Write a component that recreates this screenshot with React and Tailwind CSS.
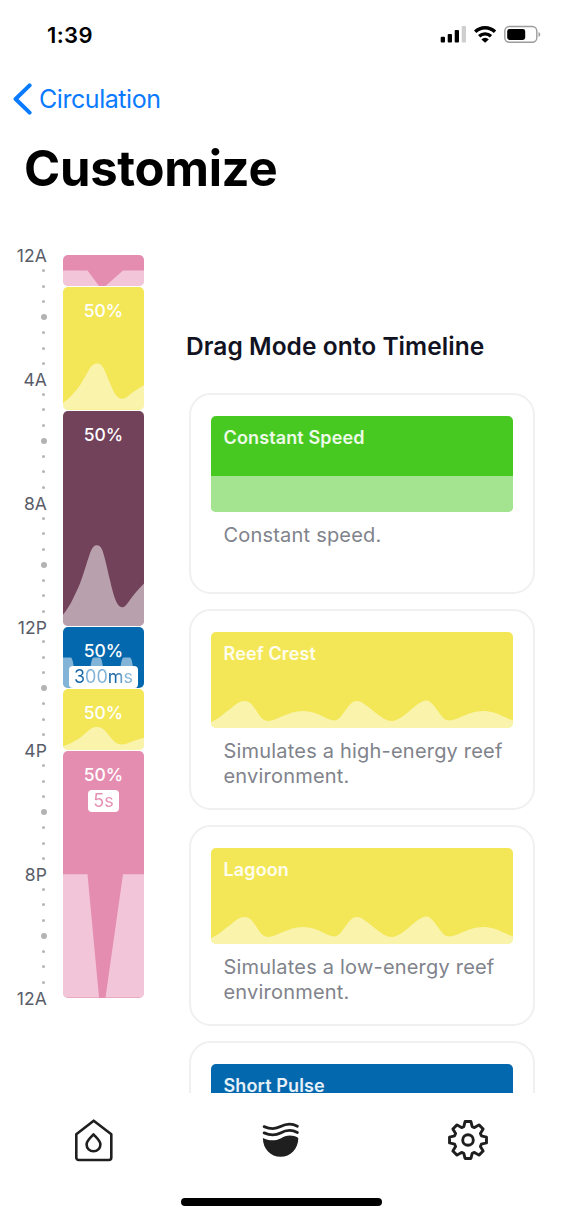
import React from 'react'

const HOUR = 30.94

const shapes = {
  reef: 'M0 94.5 C4 92 7 90 9 88 C12 85 14.5 83 17 80 C21 75 24 70 27 66 C29.5 63 31.5 62.3 34 62.3 C37 62.3 39 63.5 41 67 C43.5 71 45 75 47 78.5 C49 82.5 50.5 85 52 87 C54.5 90.3 57 91 59 91 C62 91 64.5 89.3 67 87.5 C72 84.5 76 82.3 81 80 V100 H0 Z',
  feed: 'M0 50 H24.5 L36 100 H0 Z M42.5 100 L60 50 H81 V100 Z',
  pulse: 'M0 50 H7.5 C9 50 9.5 54 10.5 62 C11.5 80 13 100 15 100 H0 Z M23 100 C25 100 26.5 80 27.5 66 C28.5 53 29.5 50 31 50 H36.5 C38 50 39 53 40 66 C41 80 42.5 100 44.5 100 Z M53 100 C55 100 56.5 80 57.5 66 C58.5 53 59.5 50 61 50 H66.5 C68 50 69 53 70 66 C71 80 72.5 100 74.5 100 Z',
}

const blocks = [
  { hours: 1, color: 'bg-[#e58db0]', shape: 'feed' },
  { hours: 4, color: 'bg-[#f3e757]', shape: 'reef', speed: '50%' },
  { hours: 7, color: 'bg-[#72415a]', shape: 'reef', speed: '50%' },
  {
    hours: 2,
    color: 'bg-[#0468ae]',
    shape: 'pulse',
    speed: '50%',
    badge: '300ms',
    badgeColor: 'bg-[linear-gradient(90deg,#0f62a3_0_14%,#81b2d6_22%_55%,#1767a5_58%_74%,#81b2d6_83%)]',
  },
  { hours: 2, color: 'bg-[#f3e757]', shape: 'reef', speed: '50%' },
  {
    hours: 8,
    color: 'bg-[#e58db0]',
    shape: 'feed',
    speed: '50%',
    badge: '5s',
    badgeColor: 'bg-[#e58db0]',
  },
]

const labels = ['12A', '4A', '8A', '12P', '4P', '8P', '12A']

const reefPreview =
  'M0 90 C5 88.5 10 84 15 80 C23 75 26 69 34 69 C44 69 47 89 57 89 C65 89 77 79 92 79 C107 79 116 88.5 123 88.5 C132 88.5 136 69 146 69 C155 69 169 89 181 89 C192 89 206 68.5 215 68.5 C224 68.5 229 88.5 238 88.5 C247 88.5 257 79 272 79 C285 79 294 86 302 88.5 V96 H0 Z'

const modes = [
  {
    title: 'Constant Speed',
    description: 'Constant speed.',
    color: 'bg-[#48c921]',
    path: 'M0 60 H302 V96 H0 Z',
  },
  {
    title: 'Reef Crest',
    description: 'Simulates a high-energy reef environment.',
    color: 'bg-[#f3e757]',
    path: reefPreview,
  },
  {
    title: 'Lagoon',
    description: 'Simulates a low-energy reef environment.',
    color: 'bg-[#f3e757]',
    path: reefPreview,
  },
  {
    title: 'Short Pulse',
    color: 'bg-[#0468ae]',
    path: 'M0 60 H20 L30 96 H0 Z',
  },
]

const gearPoints = Array.from({ length: 8 })
  .flatMap((_, i) =>
    [
      [-17.5, 14],
      [-9, 18.7],
      [9, 18.7],
      [17.5, 14],
    ].map(([offset, radius]) => {
      const angle = ((i * 45 + offset - 90) * Math.PI) / 180
      return `${(22 + radius * Math.cos(angle)).toFixed(2)},${(22 + radius * Math.sin(angle)).toFixed(2)}`
    })
  )
  .join(' ')

const StatusBar = () => (
  <div className="flex h-[70px] shrink-0 items-center justify-between pl-[47px] pr-[20px]">
    <span className="text-[22px] font-semibold leading-none tracking-[0.4px]">1:39</span>
    <svg width="102" height="20" viewBox="440 25 102 20">
      <rect x="440.7" y="36.7" width="4.3" height="5.8" rx="1" />
      <rect x="447.7" y="34" width="4.3" height="8.5" rx="1" />
      <rect x="454.7" y="30" width="4.3" height="12.5" rx="1" />
      <rect x="461.7" y="26" width="4.3" height="16.5" rx="1" fill="#cfcfcf" />
      <g fill="none" stroke="#000" strokeWidth="3.4">
        <path d="M475.2 31.8 A14 14 0 0 1 495 31.8" />
        <path d="M479.2 36.2 A8.6 8.6 0 0 1 491 36.2" />
      </g>
      <path d="M485.1 42.8 L481.4 39.4 A5.2 5.2 0 0 1 488.8 39.4 Z" />
      <rect x="504.8" y="26.5" width="32" height="15.8" rx="4.5" fill="none" stroke="#9c9c9c" strokeWidth="1.4" />
      <rect x="507.2" y="29" width="18" height="11" rx="2.4" />
      <path d="M538.5 32 C540.8 33 540.8 36 538.5 37 Z" fill="#9c9c9c" />
    </svg>
  </div>
)

const TimeScale = () => (
  <div className="flex w-[47px] flex-col pt-[17.5px]">
    {Array.from({ length: 49 }).map((_, i) => (
      <div key={i} className="flex shrink-0 items-center justify-end" style={{ height: HOUR / 2 }}>
        {i % 8 === 0 ? (
          <span className="pt-[2px] text-[17.5px] leading-none tracking-[0.1px] text-[#595d69]">{labels[i / 8]}</span>
        ) : (
          <div className="flex w-[7px] justify-center">
            <div className={i % 8 === 4 ? 'size-[6px] rounded-full bg-[#b3b3b3]' : 'size-[3px] rounded-full bg-[#b5b5b9]'} />
          </div>
        )}
      </div>
    ))}
  </div>
)

const Timeline = () => (
  <div className="ml-4 flex w-[81px] flex-col pt-[25px]">
    {blocks.map((block, i) => (
      <div key={i} className="shrink-0 pt-px first:pt-0" style={{ height: block.hours * HOUR }}>
        <div className={`relative h-full overflow-hidden rounded-[5px] ${block.color}`}>
          <svg className="absolute inset-0 size-full" viewBox="0 0 81 100" preserveAspectRatio="none">
            <path d={shapes[block.shape]} fill="#fff" fillOpacity="0.5" />
          </svg>
          <div className="relative flex flex-col items-center pt-[15px] text-[17.5px] font-medium leading-[18px] text-white">
            {block.speed && <span>{block.speed}</span>}
            {block.badge && (
              <span className="mt-[6px] flex h-[22px] items-center rounded-[4px] bg-white px-[5px]">
                <span className={`bg-clip-text text-[18px] font-normal leading-[22px] text-transparent ${block.badgeColor}`}>
                  {block.badge}
                </span>
              </span>
            )}
          </div>
        </div>
      </div>
    ))}
  </div>
)

const ModeCard = ({ mode }) => (
  <div className="h-[201px] shrink-0 rounded-[22px] border-2 border-[#f0f0f1] bg-white px-5 pt-[20.5px]">
    <div className={`relative h-24 overflow-hidden rounded-[5px] ${mode.color}`}>
      <svg className="absolute inset-0 size-full" viewBox="0 0 302 96" preserveAspectRatio="none">
        <path d={mode.path} fill="#fff" fillOpacity="0.5" />
      </svg>
      <h3 className="relative px-[12.5px] pt-[11px] text-lg font-semibold leading-[22px] tracking-[0.13px] text-white/90">
        {mode.title}
      </h3>
    </div>
    {mode.description && (
      <p className="-mr-2 pl-[12.5px] pr-3 pt-[11px] text-[20px] leading-[25.5px] tracking-[0.2px] text-[#80838b]">
        {mode.description}
      </p>
    )}
  </div>
)

const TabBar = () => (
  <nav className="grid h-[94px] shrink-0 grid-cols-3 justify-items-center pt-[23px] text-[#1f1f1f]">
    <svg width="44" height="48" viewBox="0 0 44 48" fill="none" stroke="currentColor" strokeWidth="2.6" strokeLinejoin="round">
      <path d="M21.7 4.7 L39.3 18.3 V41.5 A2.5 2.5 0 0 1 36.8 44 H6.8 A2.5 2.5 0 0 1 4.3 41.5 V18.3 Z" />
      <path d="M21.5 18.4 C24 21.4 28.4 24.5 28.4 28.6 A6.9 6.7 0 0 1 14.6 28.6 C14.6 24.5 19 21.4 21.5 18.4 Z" />
    </svg>
    <svg width="42" height="44" viewBox="0 0 42 44" className="mt-[2px]">
      <g fill="none" stroke="currentColor" strokeWidth="2.8" strokeLinecap="round">
        <path d="M4.1 8.6 C8 10.3 15 11.6 20.5 8.6 C26 5.6 32 5.2 37.4 8.2" />
        <path d="M4.1 14.9 C8 16.6 15 17.9 20.5 14.9 C26 11.9 32 11.5 37.4 14.5" />
      </g>
      <path d="M2.9 19.9 C8 22.6 15 23.4 20.5 20.4 C26 17 32.5 16.4 38.3 20 C38.3 31 30.5 38.8 20.6 38.8 C10.7 38.8 2.9 31 2.9 19.9 Z" fill="currentColor" />
    </svg>
    <svg width="44" height="44" viewBox="0 0 44 44" fill="none" stroke="currentColor" strokeWidth="2.9" strokeLinejoin="round" className="mt-[2px]">
      <polygon points={gearPoints} />
      <circle cx="22" cy="22" r="5.3" />
    </svg>
  </nav>
)

const App = () => {
  return (
    <div className="flex h-[1218px] w-[562px] flex-col overflow-hidden bg-white font-['Inter',sans-serif] text-black">
      <StatusBar />

      {/* Navigation header */}
      <header className="h-[160px] shrink-0">
        <button className="flex h-[58px] items-center gap-[6px] pl-[13px] text-[#0a7aff]">
          <svg width="20" height="32" viewBox="0 0 20 32" fill="none" stroke="currentColor" strokeWidth="4" strokeLinecap="round" strokeLinejoin="round">
            <path d="M16.6 2.4 L2.6 16 L16.6 29.6" />
          </svg>
          <span className="text-[25px] leading-none tracking-[-0.45px]">Circulation</span>
        </button>
        <h1 className="pl-[24px] pt-[11px] text-[49px] font-bold leading-[60px] tracking-[-0.3px]">Customize</h1>
      </header>

      <main className="flex h-[863px] shrink-0 overflow-hidden">
        <TimeScale />
        <Timeline />
        <section className="flex w-[391px] flex-col pl-[42px] pt-[100px]">
          <h2 className="h-[63px] shrink-0 text-[24.5px] font-semibold leading-[32px] tracking-[0.05px] text-[#111322]">
            Drag Mode onto Timeline
          </h2>
          <div className="ml-[3px] flex w-[346px] flex-col gap-[15px]">
            {modes.map((mode) => (
              <ModeCard key={mode.title} mode={mode} />
            ))}
          </div>
        </section>
      </main>

      <TabBar />
      <div className="ml-[181px] mt-[11px] h-2 w-[201px] shrink-0 rounded-full bg-black" />
    </div>
  )
}

export default App
